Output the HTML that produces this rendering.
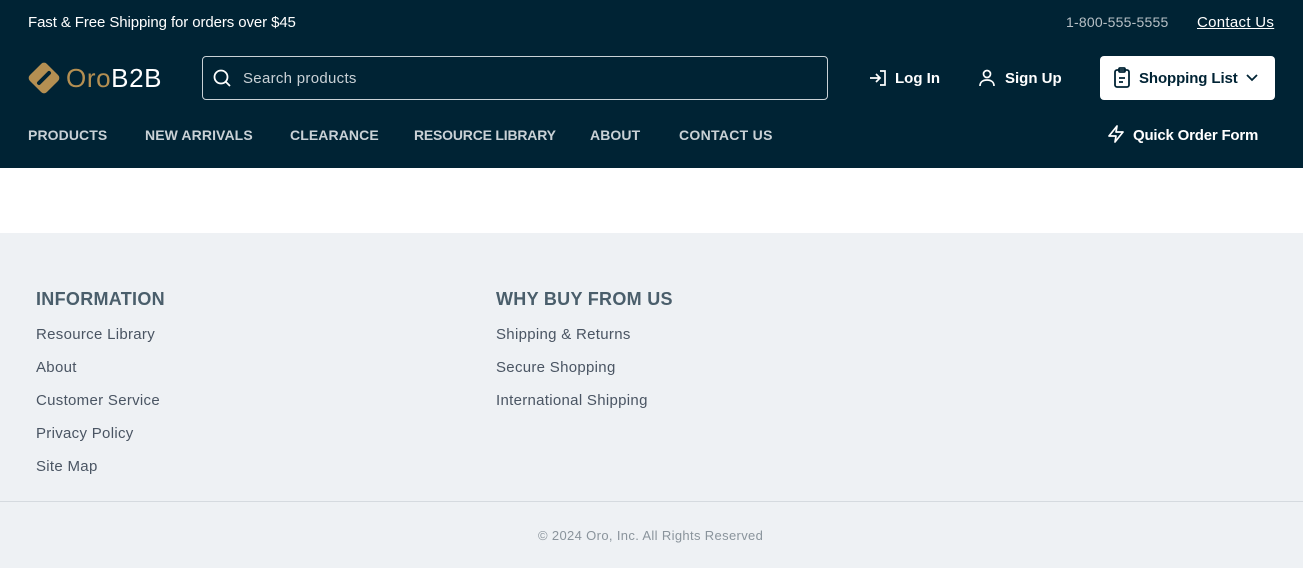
<!DOCTYPE html>
<html><head><style>
*{margin:0;padding:0;box-sizing:border-box}
body{width:1303px;height:568px;font-family:"Liberation Sans",sans-serif;background:#fff;overflow:hidden;position:relative}
.hd{position:absolute;left:0;top:0;width:1303px;height:168px;background:#002334;color:#fff}
.a{position:absolute;white-space:nowrap}
.nav{font-size:14px;font-weight:bold;color:#c9d1d6;top:127px;letter-spacing:0.1px}
.ft{position:absolute;left:0;top:233px;width:1303px;height:335px;background:#eef1f4}
.h{font-size:18px;font-weight:bold;color:#4a5e6b;top:56px;letter-spacing:0.3px}
.l{font-size:15px;color:#4a5563;letter-spacing:0.3px}
</style></head><body>
<div class="hd">
<div class="a" style="left:28px;top:14px;font-size:15px;letter-spacing:-0.1px">Fast &amp; Free Shipping for orders over $45</div>
<div class="a" style="left:1066px;top:14px;font-size:14px;color:#b7c0c6;letter-spacing:0.2px">1-800-555-5555</div>
<div class="a" style="left:1197px;top:14px;font-size:15px;text-decoration:underline;letter-spacing:0.3px">Contact Us</div>
<svg class="a" style="left:27px;top:61px" width="34" height="34" viewBox="0 0 34 34"><rect x="5" y="5" width="24" height="24" rx="4" transform="rotate(45 17 17)" fill="#b48f52"/><path d="M12 22 L22 12" stroke="#002334" stroke-width="4" stroke-linecap="round"/></svg>
<div class="a" style="left:66px;top:63px;font-size:26px;color:#b48f52;letter-spacing:0.6px">Oro<span style="color:#fff">B2B</span></div>
<div class="a" style="left:202px;top:56px;width:626px;height:44px;border:1px solid #c9d1d6;border-radius:4px"></div>
<svg class="a" style="left:212px;top:68px" width="20" height="20" viewBox="0 0 20 20" fill="none" stroke="#fff" stroke-width="1.8"><circle cx="9" cy="9" r="6.5"/><path d="M14 14l4 4"/></svg>
<div class="a" style="left:243px;top:70px;font-size:15px;color:#c9d1d6;letter-spacing:0.3px">Search products</div>
<svg class="a" style="left:868px;top:68px" width="20" height="20" viewBox="0 0 20 20" fill="none" stroke="#fff" stroke-width="1.7"><path d="M2 10h10M8 6l4 4-4 4M12 3h5v14h-5"/></svg>
<div class="a" style="left:895px;top:70px;font-size:15px;font-weight:bold">Log In</div>
<svg class="a" style="left:977px;top:68px" width="20" height="20" viewBox="0 0 20 20" fill="none" stroke="#fff" stroke-width="1.7"><circle cx="10" cy="6" r="3.5"/><path d="M3 18c0-4 3-6 7-6s7 2 7 6"/></svg>
<div class="a" style="left:1005px;top:70px;font-size:15px;font-weight:bold">Sign Up</div>
<div class="a" style="left:1100px;top:56px;width:175px;height:44px;background:#fff;border-radius:4px"></div>
<svg class="a" style="left:1113px;top:67px" width="18" height="22" viewBox="0 0 18 22" fill="none" stroke="#002334" stroke-width="1.8"><rect x="2" y="3" width="14" height="17" rx="2"/><rect x="6" y="1" width="6" height="4" rx="1"/><path d="M6 11h6M6 15h4"/></svg>
<div class="a" style="left:1139px;top:70px;font-size:15px;font-weight:bold;color:#002334;letter-spacing:-0.1px">Shopping List</div>
<svg class="a" style="left:1245px;top:73px" width="14" height="10" viewBox="0 0 14 10" fill="none" stroke="#002334" stroke-width="1.8"><path d="M2 2l5 5 5-5"/></svg>
<div class="a nav" style="left:28px">PRODUCTS</div>
<div class="a nav" style="left:145px">NEW ARRIVALS</div>
<div class="a nav" style="left:290px">CLEARANCE</div>
<div class="a nav" style="left:414px;letter-spacing:-0.2px">RESOURCE LIBRARY</div>
<div class="a nav" style="left:590px">ABOUT</div>
<div class="a nav" style="left:679px;letter-spacing:0.3px">CONTACT US</div>
<svg class="a" style="left:1106px;top:124px" width="20" height="20" viewBox="0 0 20 20" fill="none" stroke="#fff" stroke-width="1.7" stroke-linejoin="round"><path d="M11 2L3 12h7l-1 6 8-10h-7z"/></svg>
<div class="a" style="left:1133px;top:127px;font-size:15px;font-weight:bold;letter-spacing:-0.2px">Quick Order Form</div>
</div>
<div class="ft">
<div class="a h" style="left:36px">INFORMATION</div>
<div class="a l" style="left:36px;top:93px">Resource Library</div>
<div class="a l" style="left:36px;top:126px">About</div>
<div class="a l" style="left:36px;top:159px">Customer Service</div>
<div class="a l" style="left:36px;top:192px">Privacy Policy</div>
<div class="a l" style="left:36px;top:225px">Site Map</div>
<div class="a h" style="left:496px">WHY BUY FROM US</div>
<div class="a l" style="left:496px;top:93px">Shipping &amp; Returns</div>
<div class="a l" style="left:496px;top:126px">Secure Shopping</div>
<div class="a l" style="left:496px;top:159px">International Shipping</div>
<div class="a" style="left:0;top:268px;width:1303px;border-top:1px solid #d5dadf"></div>
<div class="a" style="left:538px;top:295px;font-size:13px;color:#8a949c;letter-spacing:0.35px">© 2024 Oro, Inc. All Rights Reserved</div>
</div>
</body></html>
